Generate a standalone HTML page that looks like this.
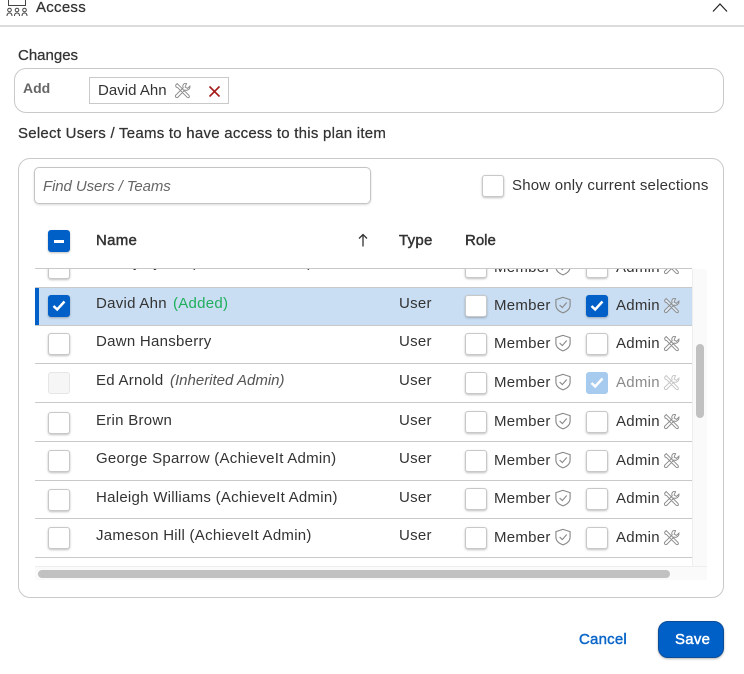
<!DOCTYPE html>
<html>
<head>
<meta charset="utf-8">
<style>
html,body{margin:0;padding:0;background:#fff;}
#p{position:relative;width:744px;height:674px;overflow:hidden;font-family:"Liberation Sans",sans-serif;color:#333;font-size:15px;letter-spacing:.27px;}
.t{position:absolute;white-space:nowrap;line-height:18px;}
.m{-webkit-text-stroke:.25px currentColor;}
.h{-webkit-text-stroke:.45px currentColor;}
#v .t{margin-top:1px;}
.cb{position:absolute;width:20px;height:20px;background:#fff;border:1px solid #c8c8c8;border-radius:3px;box-shadow:0 1px 2px rgba(0,0,0,.25);}
.on{background:#0060c8;border-color:#0060c8;}
.dis{background:#a6cbef;border-color:#a6cbef;box-shadow:none;}
.cb svg{position:absolute;left:3px;top:4px;}
.ln{position:absolute;left:35px;width:657px;height:1px;background:#c9c9c9;}
.ic{position:absolute;}
</style>
</head>
<body>
<div id="p">
<svg width="0" height="0" style="position:absolute">
<defs>
<symbol id="sh" viewBox="0 0 16 16"><path d="M8 1.200 14.300 3.200V8c0 3.400-2.800 5.700-6.300 7C4.500 13.700 1.700 11.400 1.700 8V3.200Z M5 8 7.400 10.300 11.300 5.800" fill="none" stroke="#888" stroke-width="1"/></symbol>
<symbol id="tl" viewBox="0 0 16 16"><path d="M1.500 3 3 1.500 8 6.500 14 12.500Q15 14 14 14.500T12.300 14.300L6.300 8.300 3.500 5.300 2 4.800Z M15 3.800 12.700 6 10.500 4.700 11.800 1.500Q9 .8 8.300 3.500 8.100 4.600 8.700 5.500L1.700 12.300Q.9 13.500 1.700 14.300T3.700 14.300L10.300 7.500Q11.600 8.200 13 7.500 15.300 6.300 15 3.800Z" fill="#fff" fill-opacity=".35" stroke="#8a8a8a" stroke-width=".9"/></symbol>
</defs>
</svg>

<svg class="ic" style="left:6px;top:0" width="22" height="18" viewBox="0 0 22 18" fill="none" stroke="#444" stroke-width="1"><path d="M2.500 0V5.500H19.500V0"/><circle cx="3.500" cy="10" r="1.800"/><circle cx="11" cy="10" r="1.800"/><circle cx="18.500" cy="10" r="1.800"/><path d="M1 16Q1 13 3.500 13T6 16M8.500 16Q8.500 13 11 13T13.500 16M16 16Q16 13 18.500 13T21 16"/></svg>
<div class="t m" style="left:36px;top:-1px;">Access</div>
<svg class="ic" style="left:712px;top:2px" width="16" height="11" viewBox="0 0 16 11" fill="none" stroke="#222" stroke-width="1.200"><path d="M1 9.500 8 2 15 9.500"/></svg>
<div style="position:absolute;left:0;top:25px;width:744px;height:2px;background:#dcdcdc;"></div>

<div class="t m" style="left:18px;top:47px;letter-spacing:0;">Changes</div>
<div style="position:absolute;left:14px;top:68px;width:708px;height:43px;border:1px solid #c9c9c9;border-radius:12px;"></div>
<div class="t" style="left:23px;top:79px;color:#666;font-size:14px;font-weight:bold;letter-spacing:0;">Add</div>
<div style="position:absolute;left:89px;top:77px;width:138px;height:25px;border:1px solid #c9c9c9;"></div>
<div class="t" style="left:98px;top:82px;letter-spacing:.03px;">David Ahn</div>
<svg class="ic" style="left:174px;top:82px" width="17" height="17"><use href="#tl"/></svg>
<svg class="ic" style="left:208px;top:85px" width="13" height="13" viewBox="0 0 13 13" fill="none" stroke="#a51c1c" stroke-width="1.600"><path d="M1.500 1.500 11.500 11.500M11.500 1.500 1.500 11.500"/></svg>
<div class="t m" style="left:18px;top:125px;letter-spacing:.25px;">Select Users / Teams to have access to this plan item</div>

<div style="position:absolute;left:18px;top:158px;width:704px;height:438px;border:1px solid #c9c9c9;border-radius:12px;"></div>
<div style="position:absolute;left:34px;top:167px;width:335px;height:35px;border:1px solid #c4c4c4;border-radius:5px;box-shadow:0 1px 2px rgba(0,0,0,.15);"></div>
<div class="t" style="left:43px;top:178px;font-style:italic;color:#666;letter-spacing:-.1px;">Find Users / Teams</div>
<div class="cb" style="left:482px;top:175px;"></div>
<div class="t" style="left:512px;top:177px;letter-spacing:.2px;">Show only current selections</div>

<div class="cb on" style="left:48px;top:230px;"><div style="position:absolute;left:5px;top:9px;width:10px;height:2.500px;background:#fff;"></div></div>
<div class="t h" style="left:96px;top:232px;">Name</div>
<svg class="ic" style="left:357px;top:233px" width="12" height="14" viewBox="0 0 12 14" fill="none" stroke="#333" stroke-width="1.300"><path d="M6 13.500V1.500M2 5.500 6 1.500 10 5.500"/></svg>
<div class="t h" style="left:399px;top:232px;">Type</div>
<div class="t h" style="left:465px;top:232px;letter-spacing:0;">Role</div>

<!-- table viewport -->
<div id="v" style="position:absolute;left:0;top:269px;width:744px;height:297px;overflow:hidden;">
  <div style="position:relative;top:-269px;height:674px;">
    <!-- clipped row -->
    <div class="cb" style="left:48px;top:257px;"></div>
    <div class="t" style="left:96px;top:253px;">Danny Lyons (AchieveIt Admin)</div>
    <div class="t" style="left:399px;top:253px;">User</div>
    <div class="cb" style="left:465px;top:256px;"></div>
    <div class="t" style="left:494px;top:258px;">Member</div>
    <svg class="ic" style="left:554px;top:258px" width="18" height="18"><use href="#sh"/></svg>
    <div class="cb" style="left:586px;top:256px;"></div>
    <div class="t" style="left:616px;top:258px;">Admin</div>
    <svg class="ic" style="left:663px;top:258px" width="17" height="17"><use href="#tl"/></svg>

    <!-- David Ahn -->
    <div style="position:absolute;left:35px;top:288px;width:657px;height:37px;background:#c9def3;"></div>
    <div style="position:absolute;left:35px;top:287px;width:4px;height:39px;background:#0060c8;"></div>
    <div class="cb on" style="left:48px;top:295px;"><svg width="14" height="12" viewBox="0 0 14 12" fill="none" stroke="#fff" stroke-width="2.500"><path d="M1.500 6 5.200 9.500 12.500 1.500"/></svg></div>
    <div class="t" style="left:96px;top:294px;">David Ahn</div>
    <div class="t" style="left:173px;top:294px;color:#1fae5c;">(Added)</div>
    <div class="t" style="left:399px;top:294px;">User</div>
    <div class="cb" style="left:465px;top:295px;"></div>
    <div class="t" style="left:494px;top:296px;">Member</div>
    <svg class="ic" style="left:554px;top:296px" width="18" height="18"><use href="#sh"/></svg>
    <div class="cb on" style="left:586px;top:295px;"><svg width="14" height="12" viewBox="0 0 14 12" fill="none" stroke="#fff" stroke-width="2.500"><path d="M1.500 6 5.200 9.500 12.500 1.500"/></svg></div>
    <div class="t" style="left:616px;top:296px;">Admin</div>
    <svg class="ic" style="left:663px;top:297px" width="17" height="17"><use href="#tl"/></svg>

    <!-- Dawn -->
    <div class="cb" style="left:48px;top:333px;"></div>
    <div class="t" style="left:96px;top:332px;">Dawn Hansberry</div>
    <div class="t" style="left:399px;top:332px;">User</div>
    <div class="cb" style="left:465px;top:333px;"></div>
    <div class="t" style="left:494px;top:334px;">Member</div>
    <svg class="ic" style="left:554px;top:334px" width="18" height="18"><use href="#sh"/></svg>
    <div class="cb" style="left:586px;top:333px;"></div>
    <div class="t" style="left:616px;top:334px;">Admin</div>
    <svg class="ic" style="left:663px;top:335px" width="17" height="17"><use href="#tl"/></svg>

    <!-- Ed -->
    <div class="cb" style="left:48px;top:372px;background:#f6f6f6;border-color:#e6e6e6;box-shadow:none;"></div>
    <div class="t" style="left:96px;top:371px;">Ed Arnold</div>
    <div class="t" style="left:170px;top:371px;font-style:italic;color:#555;letter-spacing:0;">(Inherited Admin)</div>
    <div class="t" style="left:399px;top:371px;">User</div>
    <div class="cb" style="left:465px;top:372px;"></div>
    <div class="t" style="left:494px;top:373px;">Member</div>
    <svg class="ic" style="left:554px;top:373px" width="18" height="18"><use href="#sh"/></svg>
    <div class="cb dis" style="left:586px;top:372px;"><svg width="14" height="12" viewBox="0 0 14 12" fill="none" stroke="#fff" stroke-width="2.500"><path d="M1.500 6 5.200 9.500 12.500 1.500"/></svg></div>
    <div class="t" style="left:616px;top:373px;color:#8a8a8a;">Admin</div>
    <svg class="ic" style="left:663px;top:374px;opacity:.5" width="17" height="17"><use href="#tl"/></svg>

    <!-- Erin -->
    <div class="cb" style="left:48px;top:412px;"></div>
    <div class="t" style="left:96px;top:411px;">Erin Brown</div>
    <div class="t" style="left:399px;top:411px;">User</div>
    <div class="cb" style="left:465px;top:411px;"></div>
    <div class="t" style="left:494px;top:412px;">Member</div>
    <svg class="ic" style="left:554px;top:412px" width="18" height="18"><use href="#sh"/></svg>
    <div class="cb" style="left:586px;top:411px;"></div>
    <div class="t" style="left:616px;top:412px;">Admin</div>
    <svg class="ic" style="left:663px;top:413px" width="17" height="17"><use href="#tl"/></svg>

    <!-- George -->
    <div class="cb" style="left:48px;top:450px;"></div>
    <div class="t" style="left:96px;top:449px;">George Sparrow (AchieveIt Admin)</div>
    <div class="t" style="left:399px;top:449px;">User</div>
    <div class="cb" style="left:465px;top:450px;"></div>
    <div class="t" style="left:494px;top:451px;">Member</div>
    <svg class="ic" style="left:554px;top:451px" width="18" height="18"><use href="#sh"/></svg>
    <div class="cb" style="left:586px;top:450px;"></div>
    <div class="t" style="left:616px;top:451px;">Admin</div>
    <svg class="ic" style="left:663px;top:452px" width="17" height="17"><use href="#tl"/></svg>

    <!-- Haleigh -->
    <div class="cb" style="left:48px;top:489px;"></div>
    <div class="t" style="left:96px;top:488px;">Haleigh Williams (AchieveIt Admin)</div>
    <div class="t" style="left:399px;top:488px;">User</div>
    <div class="cb" style="left:465px;top:488px;"></div>
    <div class="t" style="left:494px;top:489px;">Member</div>
    <svg class="ic" style="left:554px;top:489px" width="18" height="18"><use href="#sh"/></svg>
    <div class="cb" style="left:586px;top:488px;"></div>
    <div class="t" style="left:616px;top:489px;">Admin</div>
    <svg class="ic" style="left:663px;top:490px" width="17" height="17"><use href="#tl"/></svg>

    <!-- Jameson -->
    <div class="cb" style="left:48px;top:527px;"></div>
    <div class="t" style="left:96px;top:526px;">Jameson Hill (AchieveIt Admin)</div>
    <div class="t" style="left:399px;top:526px;">User</div>
    <div class="cb" style="left:465px;top:527px;"></div>
    <div class="t" style="left:494px;top:528px;">Member</div>
    <svg class="ic" style="left:554px;top:528px" width="18" height="18"><use href="#sh"/></svg>
    <div class="cb" style="left:586px;top:527px;"></div>
    <div class="t" style="left:616px;top:528px;">Admin</div>
    <svg class="ic" style="left:663px;top:529px" width="17" height="17"><use href="#tl"/></svg>

    <div class="ln" style="top:287px;"></div>
    <div class="ln" style="top:325px;"></div>
    <div class="ln" style="top:363px;"></div>
    <div class="ln" style="top:402px;"></div>
    <div class="ln" style="top:441px;"></div>
    <div class="ln" style="top:480px;"></div>
    <div class="ln" style="top:518px;"></div>
    <div class="ln" style="top:557px;"></div>
  </div>
</div>
<div class="ln" style="top:268px;"></div>

<!-- scrollbars -->
<div style="position:absolute;left:692px;top:269px;width:15px;height:297px;background:#fafafa;border-left:1px solid #eee;box-sizing:border-box;"></div>
<div style="position:absolute;left:696px;top:344px;width:8px;height:74px;background:#c1c1c1;border-radius:4px;"></div>
<div style="position:absolute;left:35px;top:566px;width:672px;height:14px;background:#fafafa;border-top:1px solid #eee;box-sizing:border-box;"></div>
<div style="position:absolute;left:38px;top:570px;width:632px;height:8px;background:#c1c1c1;border-radius:4px;"></div>

<div class="t h" style="left:579px;top:631px;color:#0a66c8;letter-spacing:.2px;">Cancel</div>
<div style="position:absolute;left:658px;top:621px;width:64px;height:35px;background:#0060c8;border:1px solid #0a4c98;border-radius:10px;box-shadow:0 1px 2px rgba(0,0,0,.3);"></div>
<div class="t h" style="left:675px;top:631px;color:#fff;">Save</div>
</div>
</body>
</html>
